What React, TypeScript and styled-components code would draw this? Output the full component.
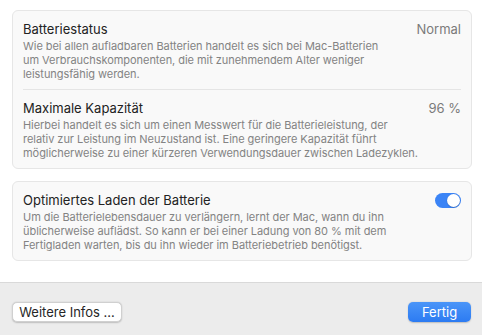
import React from "react";
import { styled, createGlobalStyle } from "styled-components";

type Setting = {
    title: string;
    lines: string[];
    value?: string;
    toggle?: boolean;
}

const healthRows: Setting[] = [
    {
        title: "Batteriestatus",
        value: "Normal",
        lines: [
            "Wie bei allen aufladbaren Batterien handelt es sich bei Mac-Batterien",
            "um Verbrauchskomponenten, die mit zunehmendem Alter weniger",
            "leistungsfähig werden.",
        ],
    },
    {
        title: "Maximale Kapazität",
        value: "96 %",
        lines: [
            "Hierbei handelt es sich um einen Messwert für die Batterieleistung, der",
            "relativ zur Leistung im Neuzustand ist. Eine geringere Kapazität führt",
            "möglicherweise zu einer kürzeren Verwendungsdauer zwischen Ladezyklen.",
        ],
    },
];

const chargingRow: Setting = {
    title: "Optimiertes Laden der Batterie",
    toggle: true,
    lines: [
        "Um die Batterielebensdauer zu verlängern, lernt der Mac, wann du ihn",
        "üblicherweise auflädst. So kann er bei einer Ladung von 80 % mit dem",
        "Fertigladen warten, bis du ihn wieder im Batteriebetrieb benötigst.",
    ],
};

const SettingRow: React.FC<{ item: Setting }> = ({ item }) => {
    return (
        <Row>
            <RowHead>
                <Title>{item.title}</Title>
                {item.value && <Value>{item.value}</Value>}
                {item.toggle && (
                    <Toggle $on>
                        <span />
                    </Toggle>
                )}
            </RowHead>
            <Desc>
                {item.lines.map((line) => (
                    <span key={line}>{line}</span>
                ))}
            </Desc>
        </Row>
    );
}

const App: React.FC = () => {
    return (
        <>
            <GlobalStyle />
            <Sheet>
                <Content>
                    <Card>
                        {healthRows.map((row, i) => (
                            <React.Fragment key={row.title}>
                                {i > 0 && <Divider />}
                                <SettingRow item={row} />
                            </React.Fragment>
                        ))}
                    </Card>
                    <Card>
                        <SettingRow item={chargingRow} />
                    </Card>
                </Content>

                <Footer>
                    <Button>Weitere Infos …</Button>
                    <Button $primary>Fertig</Button>
                </Footer>
            </Sheet>
        </>
    );
}


const GlobalStyle = createGlobalStyle`
    body {
        margin: 0;
        background: #ffffff;
        font-family: Inter, "Noto Sans", "Liberation Sans", sans-serif;
        -webkit-font-smoothing: antialiased;
    }
`;


const Sheet = styled.div`
    width: 482px;
    height: 335px;
    display: flex;
    flex-direction: column;
    overflow: hidden;
`;


const Content = styled.div`
    flex: 1;
    display: flex;
    flex-direction: column;
    gap: 12px;
    padding: 10px 10px 0 12px;
`;


const Card = styled.div`
    background: #f9f9f9;
    border: 1px solid #e6e6e6;
    border-radius: 6px;
`;


const Row = styled.div`
    padding: 10px 10px 8px 10px;
`;


const RowHead = styled.div`
    display: flex;
    align-items: center;
    justify-content: space-between;
`;


const Title = styled.div`
    font-size: 13px;
    line-height: 16px;
    color: #222222;
`;


const Value = styled.div`
    font-size: 13px;
    line-height: 16px;
    color: #7b7b7b;
`;


const Desc = styled.p`
    margin: 2px 0 0 0;
    display: flex;
    flex-direction: column;
    font-size: 11px;
    line-height: 14px;
    letter-spacing: -0.05px;
    color: #838383;
    white-space: nowrap;
`;


const Divider = styled.div`
    height: 1px;
    margin: 0 10px;
    background: #e5e5e5;
`;


const Toggle = styled.div<{ $on?: boolean }>`
    width: 26px;
    height: 15px;
    border-radius: 8px;
    background: ${(p) => (p.$on ? "#3b84f6" : "#dcdcdc")};
    display: flex;
    align-items: center;
    justify-content: ${(p) => (p.$on ? "flex-end" : "flex-start")};
    padding: 0 1px;
    box-sizing: border-box;

    span {
        width: 13px;
        height: 13px;
        border-radius: 50%;
        background: #ffffff;
        box-shadow: 0 0.5px 1px rgba(0, 0, 0, 0.3);
    }
`;


const Footer = styled.div`
    height: 53px;
    background: #ececec;
    border-top: 1px solid #d9d9d9;
    display: flex;
    align-items: flex-start;
    justify-content: space-between;
    padding: 19px 11px 0 12px;
    box-sizing: border-box;
`;


const Button = styled.button<{ $primary?: boolean }>`
    height: 20px;
    padding: 0;
    width: ${(p) => (p.$primary ? "63px" : "110px")};
    border-radius: 5px;
    font-family: inherit;
    font-size: 13px;
    line-height: 18px;
    color: ${(p) => (p.$primary ? "#ffffff" : "#262626")};
    border: ${(p) => (p.$primary ? "none" : "0.5px solid #d0d0d0")};
    background: ${(p) => (p.$primary ? "linear-gradient(#4a95f8, #2c7bf2)" : "#ffffff")};
    box-shadow: 0 0.5px 1.5px rgba(0, 0, 0, 0.2);
`;


export default App;
